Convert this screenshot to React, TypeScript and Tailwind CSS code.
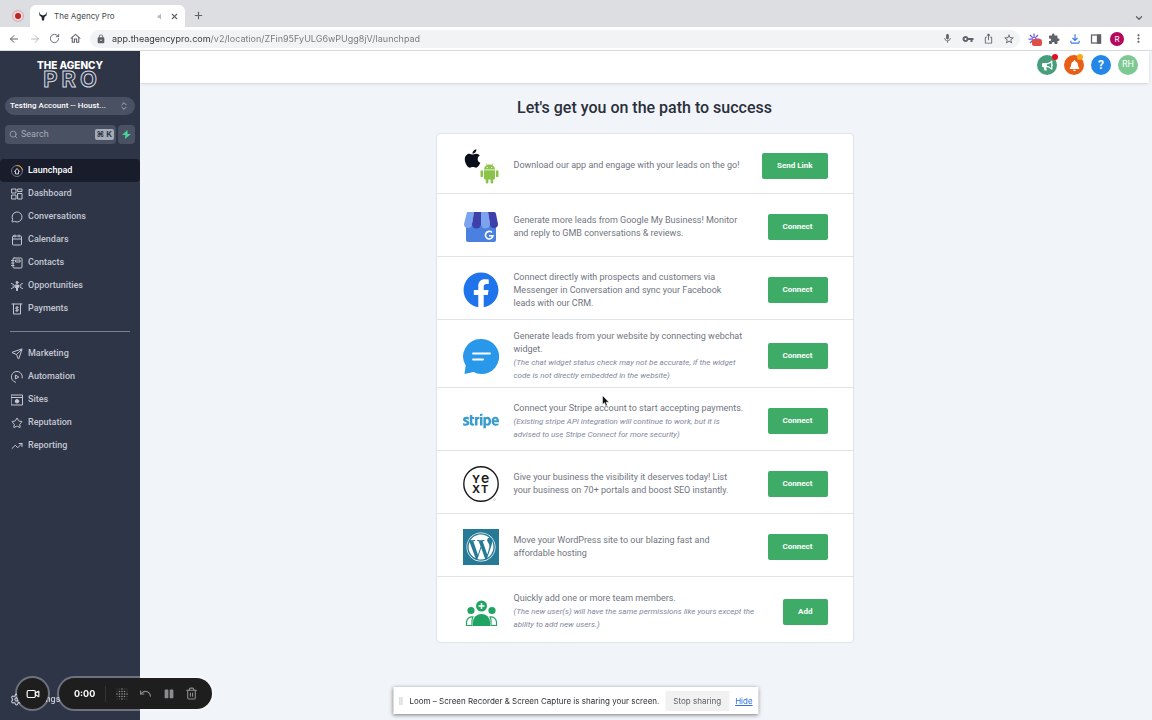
import type { ReactNode } from 'react'
import {
  ArrowLeft,
  ArrowRight,
  Calendar,
  ChevronDown,
  ChevronsUpDown,
  MessageCircle,
  Plus,
  RotateCw,
  Search,
  Send,
  Settings,
  Star,
  Trash2,
  TrendingUp,
  Undo,
  Video,
  X,
} from 'lucide-react'
import { FaApple, FaBell, FaBullhorn, FaFacebook, FaPause, FaStripe, FaWordpress } from 'react-icons/fa'
import {
  MdExtension,
  MdLock,
  MdMic,
  MdMoreVert,
  MdOutlineFileDownload,
  MdOutlineHome,
  MdOutlineIosShare,
  MdStarBorder,
  MdVolumeMute,
  MdVpnKey,
} from 'react-icons/md'

type NavItem = { label: string; icon: ReactNode; active?: boolean }

type Step = {
  icon: ReactNode
  text: string
  note?: string
  action: string
  height: string
}

function LineIcon({ children }: { children: ReactNode }) {
  return (
    <svg width="12" height="12" viewBox="0 0 24 24" fill="none" stroke="currentColor" strokeWidth="2" strokeLinecap="round" strokeLinejoin="round">
      {children}
    </svg>
  )
}

const mainNav: NavItem[] = [
  {
    label: 'Launchpad',
    active: true,
    icon: (
      <LineIcon>
        <circle cx="12" cy="12" r="11" stroke="#6f7686" />
        <path d="M12 1a11 11 0 0 1 11 9" stroke="#e0a040" />
        <path d="M9 17v-4H7l5-6 5 6h-2v4z" stroke="#d5d8df" />
      </LineIcon>
    ),
  },
  {
    label: 'Dashboard',
    icon: (
      <LineIcon>
        <rect x="2" y="2" width="8" height="8" />
        <rect x="14" y="2" width="8" height="5" />
        <rect x="2" y="14" width="8" height="8" />
        <rect x="14" y="11" width="8" height="11" />
      </LineIcon>
    ),
  },
  { label: 'Conversations', icon: <MessageCircle size={12} /> },
  { label: 'Calendars', icon: <Calendar size={12} /> },
  {
    label: 'Contacts',
    icon: (
      <LineIcon>
        <rect x="4" y="2" width="18" height="20" rx="2" />
        <path d="M1 7h5M1 12h5M1 17h5M10 6h8v4h-8z" />
      </LineIcon>
    ),
  },
  {
    label: 'Opportunities',
    icon: (
      <LineIcon>
        <circle cx="12" cy="5" r="2" fill="currentColor" />
        <path d="M9 10h6v5h-2v6h-2v-6H9z" fill="currentColor" />
        <path d="M1 7l4 2M1 17l4-2M23 7l-4 2M23 17l-4-2M4 12h3M20 12h-3" />
      </LineIcon>
    ),
  },
  {
    label: 'Payments',
    icon: (
      <LineIcon>
        <path d="M2 2h20M5 2v20h14V2M14.500 8.500h-3.500a1.700 1.700 0 0 0 0 3.500h2a1.700 1.700 0 0 1 0 3.500H9.500M12 7v10" />
      </LineIcon>
    ),
  },
]

const toolsNav: NavItem[] = [
  { label: 'Marketing', icon: <Send size={12} /> },
  {
    label: 'Automation',
    icon: (
      <LineIcon>
        <path d="M22.500 14A11 11 0 1 0 9 22.500" />
        <path d="M9.500 8.500l6 3.500-6 3.500z" />
      </LineIcon>
    ),
  },
  {
    label: 'Sites',
    icon: (
      <LineIcon>
        <rect x="1" y="2" width="22" height="20" />
        <path d="M1 7h22" />
        <circle cx="12" cy="14.500" r="3.500" fill="currentColor" />
      </LineIcon>
    ),
  },
  { label: 'Reputation', icon: <Star size={12} /> },
  { label: 'Reporting', icon: <TrendingUp size={12} /> },
]

function AppStores() {
  return (
    <div className="relative h-9 w-9">
      <FaApple size={21} className="absolute -left-px top-0 text-[#0b0f1a]" />
      <svg className="absolute bottom-0 right-0" width="19" height="21" viewBox="0 0 19 21" fill="#8bc34a">
        <path d="M4 6.500a5.500 5 0 0 1 11 0z" />
        <path d="M6 0.500l1.500 2.500M13 0.500l-1.500 2.500" stroke="#8bc34a" strokeWidth="0.700" />
        <path d="M4 7.200h11v8a1.200 1.200 0 0 1-1.200 1.200H5.200A1.200 1.200 0 0 1 4 15.200z" />
        <rect x="0.500" y="7.200" width="2.600" height="7" rx="1.300" />
        <rect x="15.900" y="7.200" width="2.600" height="7" rx="1.300" />
        <rect x="5.800" y="14" width="2.600" height="6.600" rx="1.300" />
        <rect x="10.600" y="14" width="2.600" height="6.600" rx="1.300" />
        <circle cx="7.200" cy="4.300" r="0.600" fill="#fff" />
        <circle cx="11.800" cy="4.300" r="0.600" fill="#fff" />
      </svg>
    </div>
  )
}

function StoreFront() {
  return (
    <svg width="36" height="36" viewBox="0 0 36 36">
      <path d="M3 14h30v17a2 2 0 0 1-2 2H5a2 2 0 0 1-2-2z" fill="#4a80e0" />
      <path d="M4 3h7l-2 12a4 4 0 0 1-8 0z" fill="#7ba4ee" />
      <path d="M11 3h7v12a4 4 0 0 1-9 0z" fill="#3c40a8" />
      <path d="M18 3h7l2 12a4 4 0 0 1-9 0z" fill="#7ba4ee" />
      <path d="M25 3h6a2 2 0 0 1 2 2l2 10a4 4 0 0 1-8 0z" fill="#3c40a8" />
      <path d="M29 23.500a3.800 3.800 0 1 0 1 3.200h-4" fill="none" stroke="#fff" strokeWidth="1.600" />
    </svg>
  )
}

function ChatBubble() {
  return (
    <svg width="36" height="36" viewBox="0 0 36 36">
      <path d="M18.500 1a17.500 17.500 0 1 1-8 33L1.500 36l1.200-8.500A17.500 17.500 0 0 1 18.500 1z" fill="#2a98ea" />
      <path d="M10 15.500h17M10 21.500h10" stroke="#fff" strokeWidth="1.800" strokeLinecap="round" />
    </svg>
  )
}

function Yext() {
  return (
    <svg width="36" height="36" viewBox="0 0 36 36" fill="#1c1c1c" fontFamily="Inter, sans-serif" fontWeight="700">
      <circle cx="18" cy="18" r="17.200" fill="none" stroke="#1c1c1c" strokeWidth="1.400" />
      <text x="9" y="17" fontSize="11">Y</text>
      <text x="18" y="17" fontSize="14" fontWeight="600">e</text>
      <text x="9" y="27" fontSize="11">X</text>
      <text x="18" y="27" fontSize="11">T</text>
      <circle cx="31.500" cy="33.500" r="1" fill="none" stroke="#aaa" strokeWidth="0.500" />
    </svg>
  )
}

function TeamAdd() {
  return (
    <svg width="36" height="36" viewBox="0 0 36 36" fill="#1fa463">
      <circle cx="18.500" cy="12" r="5.500" />
      <path d="M18.500 9v6M15.500 12h6" stroke="#fff" strokeWidth="1.500" />
      <circle cx="8" cy="16.500" r="3.600" />
      <circle cx="29" cy="16.500" r="3.600" />
      <path d="M10 32v-4a8.500 8 0 0 1 17 0v4z" />
      <path d="M9 31.500v-5q0-2 1-3.500a5.500 5.500 0 0 0-6.500 5v3.500zM28 31.500v-5q0-2-1-3.500a5.500 5.500 0 0 1 6.500 5v3.500z" fill="none" stroke="#1fa463" strokeWidth="1.200" />
    </svg>
  )
}

const steps: Step[] = [
  {
    icon: <AppStores />,
    text: 'Download our app and engage with your leads on the go!',
    action: 'Send Link',
    height: 'min-h-[60px]',
  },
  {
    icon: <StoreFront />,
    text: 'Generate more leads from Google My Business! Monitor and reply to GMB conversations & reviews.',
    action: 'Connect',
    height: 'min-h-[63px]',
  },
  {
    icon: <FaFacebook size={36} className="text-[#1f74ec]" />,
    text: 'Connect directly with prospects and customers via Messenger in Conversation and sync your Facebook leads with our CRM.',
    action: 'Connect',
    height: 'min-h-[63px]',
  },
  {
    icon: <ChatBubble />,
    text: 'Generate leads from your website by connecting webchat widget.',
    note: '(The chat widget status check may not be accurate, if the widget code is not directly embedded in the website)',
    action: 'Connect',
    height: 'min-h-[68px]',
  },
  {
    icon: <FaStripe size={36} className="text-[#3a9ccd]" />,
    text: 'Connect your Stripe account to start accepting payments.',
    note: '(Existing stripe API integration will continue to work, but it is advised to use Stripe Connect for more security)',
    action: 'Connect',
    height: 'min-h-[63px]',
  },
  {
    icon: <Yext />,
    text: 'Give your business the visibility it deserves today! List your business on 70+ portals and boost SEO instantly.',
    action: 'Connect',
    height: 'min-h-[63px]',
  },
  {
    icon: (
      <div className="flex h-9 w-9 items-center justify-center bg-[#277a96]">
        <FaWordpress size={30} className="text-white" />
      </div>
    ),
    text: 'Move your WordPress site to our blazing fast and affordable hosting',
    action: 'Connect',
    height: 'min-h-[63px]',
  },
  {
    icon: <TeamAdd />,
    text: 'Quickly add one or more team members.',
    note: '(The new user(s) will have the same permissions like yours except the ability to add new users.)',
    action: 'Add',
    height: 'min-h-[65px]',
  },
]

function BrowserChrome() {
  return (
    <div className="font-[Inter,sans-serif] text-[#5f6368]">
      <div className="flex h-[27px] items-end bg-[#dddee2] pl-3 pr-2">
        <span className="mb-[5px] flex h-3 w-3 items-center justify-center rounded-full border border-[#e8a3a5]">
          <span className="h-1.5 w-1.5 rounded-full bg-[#c5221f]" />
        </span>
        <div className="ml-1.5 flex h-[22px] w-[155px] items-center rounded-t-md bg-white pl-2 pr-1.5 text-[8px]">
          <svg width="10" height="10" viewBox="0 0 20 20" fill="#1f2536">
            <path d="M2 1l3 6 5 2 5-2 3-6-1 8-4 3-1 7H8l-1-7-4-3z" />
          </svg>
          <span className="ml-1.5 flex-1 text-[#45484d]">The Agency Pro</span>
          <MdVolumeMute size={9} className="mr-1.5 text-[#b5b7ba]" />
          <button aria-label="Close tab"><X size={9} strokeWidth={3} /></button>
        </div>
        <button aria-label="New tab" className="mb-1.5 ml-2"><Plus size={11} strokeWidth={2.5} /></button>
        <button aria-label="Search tabs" className="mb-1 ml-auto"><ChevronDown size={10} strokeWidth={3} /></button>
      </div>
      <div className="flex h-6 items-center border-b border-[#dcdde0] bg-white pl-2 pr-[7px]">
        <div className="flex w-[74px] items-center justify-between">
          <button aria-label="Back"><ArrowLeft size={12} /></button>
          <button aria-label="Forward" className="text-[#b9bbbe]"><ArrowRight size={12} /></button>
          <button aria-label="Reload"><RotateCw size={11} /></button>
          <button aria-label="Home"><MdOutlineHome size={13} /></button>
        </div>
        <div className="ml-2 flex h-[18px] flex-1 items-center rounded-full bg-[#f1f3f4] pl-1.5 pr-[5px]">
          <MdLock size={10} />
          <input
            aria-label="Address"
            defaultValue="app.theagencypro.com/v2/location/ZFin95FyULG6wPUgg8jV/launchpad"
            className="ml-1.5 min-w-0 flex-1 bg-[linear-gradient(90deg,#303236_98px,#74777b_98px)] bg-clip-text text-[9px] text-transparent outline-none"
          />
          <div className="flex items-center gap-[9px]">
            <MdMic size={11} />
            <MdVpnKey size={12} />
            <MdOutlineIosShare size={11} />
            <MdStarBorder size={12} />
          </div>
        </div>
        <div className="ml-2 flex items-center gap-2">
          <button aria-label="Loom" className="relative h-3 w-3">
            <svg width="12" height="12" viewBox="0 0 24 24" stroke="#6a5be2" strokeWidth="2.500">
              <circle cx="12" cy="12" r="4" fill="none" />
              <path d="M12 1v6M12 17v6M1 12h6M17 12h6M4 4l4 4M16 16l4 4M4 20l4-4M16 8l4-4" />
            </svg>
            <span className="absolute left-1 top-1.5 h-[7px] w-2.5 rounded-xs bg-[#e04f47]" />
          </button>
          <MdExtension size={12} />
          <MdOutlineFileDownload size={14} className="text-[#3b78e7]" />
          <svg width="12" height="12" viewBox="0 0 24 24" fill="none" stroke="currentColor" strokeWidth="2.500">
            <rect x="3" y="4" width="18" height="16" />
            <path d="M15 4h6v16h-6z" fill="currentColor" />
          </svg>
          <span className="flex h-3.5 w-3.5 items-center justify-center rounded-full bg-[#b5085b] text-[8px] text-white">R</span>
          <button aria-label="Menu"><MdMoreVert size={13} /></button>
        </div>
      </div>
    </div>
  )
}

function NavList({ items }: { items: NavItem[] }) {
  return (
    <ul>
      {items.map((item) => (
        <li key={item.label}>
          <a
            href="#"
            className={`flex h-[23px] items-center gap-[5px] pl-[11px] text-[9px] font-medium ${
              item.active ? 'rounded-sm bg-[#191c2a] text-white' : 'text-[#c3c7d1]'
            }`}
          >
            {item.icon}
            {item.label}
          </a>
        </li>
      ))}
    </ul>
  )
}

function Sidebar() {
  return (
    <aside className="w-[140px] shrink-0 bg-[#2e3547] pt-2">
      <div className="flex flex-col items-center text-white">
        <span className="font-[Inter,sans-serif] text-[10px] font-extrabold leading-3">THE AGENCY</span>
        <span className="flex gap-1 font-[Inter,sans-serif] text-[22px] font-bold leading-4 text-transparent [-webkit-text-stroke:1px_#d7dae1]">
          <span>P</span>
          <span>R</span>
          <span>O</span>
        </span>
      </div>
      <div className="mt-2.5 px-[5px]">
        <div className="relative">
          <select
            aria-label="Account"
            className="block h-[18px] w-full appearance-none rounded-full bg-[#4a5162] pl-[5px] pr-6 text-[8px] font-medium text-white"
          >
            <option>Testing Account -- Houst...</option>
          </select>
          <ChevronsUpDown size={10} className="pointer-events-none absolute right-1.5 top-1 text-[#b9bdc8]" />
        </div>
        <div className="mt-2.5 flex gap-0.5">
          <label className="flex h-[19px] flex-1 items-center rounded-sm bg-[#4a5162] pl-1 pr-0.5 text-[#a6abb8]">
            <Search size={9} />
            <input placeholder="Search" aria-label="Search" className="ml-[3px] w-0 flex-1 text-[9px] outline-none placeholder:text-[#a6abb8]" />
            <kbd className="rounded-xs bg-[#a6abb8] px-0.5 font-[Inter,'DejaVu_Sans',sans-serif] text-[8px] font-bold leading-[11px] text-[#2e3547]">⌘ K</kbd>
          </label>
          <button aria-label="Quick actions" className="flex h-[19px] w-[17px] items-center justify-center rounded-sm bg-[#4a5162]">
            <svg width="9" height="9" viewBox="0 0 16 16" fill="#43d69b">
              <path d="M9.500 0L0 9h6l-1 7 11-9h-6z" />
            </svg>
          </button>
        </div>
      </div>
      <nav className="mt-[15px]">
        <NavList items={mainNav} />
        <hr className="mx-2.5 mt-[11px] mb-2.5 border-[#7c8292]" />
        <NavList items={toolsNav} />
      </nav>
      <a href="#" className="fixed bottom-3.5 left-2.5 flex items-center gap-1 text-[9px] font-medium text-[#c3c7d1]">
        <Settings size={13} />
        Settings
      </a>
    </aside>
  )
}

function TopBar() {
  return (
    <header className="flex h-8 items-center justify-end gap-[7px] bg-white pb-1 pr-[11px] text-white shadow-sm">
      <button aria-label="Announcements" className="relative flex h-5 w-5 items-center justify-center rounded-full bg-[#469e7a]">
        <FaBullhorn size={11} />
        <span className="absolute -right-px -top-px h-1.5 w-1.5 rounded-full bg-[#e01020]" />
      </button>
      <button aria-label="Notifications" className="relative flex h-5 w-5 items-center justify-center rounded-full bg-[#ea5d16]">
        <FaBell size={11} />
        <span className="absolute right-px -top-px h-1.5 w-1.5 rounded-full bg-[#f8a91b]" />
      </button>
      <button aria-label="Help" className="flex h-5 w-5 items-center justify-center rounded-full bg-[#2487e8] text-[12px] font-bold">?</button>
      <button aria-label="Profile" className="flex h-5 w-5 items-center justify-center rounded-full bg-[#7cc993] text-[9px]">RH</button>
    </header>
  )
}

function StepRow({ step }: { step: Step }) {
  return (
    <li className={`flex items-center border-b border-[#dfe3ea] pt-1 pl-[26px] pr-[25px] last:border-b-0 ${step.height}`}>
      <div className="flex w-9 shrink-0 justify-center">{step.icon}</div>
      <div className="ml-[15px] mr-5 flex-1 leading-[13px]">
        <p className="max-w-[230px] text-[9px] text-[#707580]">{step.text}</p>
        {step.note && <p className="text-[8px] italic text-[#8288a0]">{step.note}</p>}
      </div>
      <button className="h-[26px] shrink-0 rounded-xs bg-[#3eac67] px-[15px] text-[8px] font-bold text-white">{step.action}</button>
    </li>
  )
}

function LoomControls() {
  return (
    <div className="fixed bottom-[11px] left-[17px] flex gap-[11px] text-[#8d8d8f]">
      <button aria-label="Camera" className="flex h-[31px] w-[31px] items-center justify-center rounded-full bg-[#1e1e1f] text-white ring-2 ring-white/30">
        <Video size={14} />
      </button>
      <div className="flex h-[31px] w-[153px] items-center rounded-full bg-[#1e1e1f] pl-[15px] pr-3.5 ring-2 ring-white/30">
        <span className="font-[Inter,sans-serif] text-[9px] font-bold text-white">0:00</span>
        <span className="ml-2.5 h-4 w-px bg-[#333335]" />
        <div className="ml-2.5 flex flex-1 items-center justify-between">
          <button aria-label="Effects">
            <svg width="12" height="12" viewBox="0 0 12 12" fill="currentColor">
              {[1, 3.5, 6, 8.5, 11].map((y) =>
                [1, 3.5, 6, 8.5, 11].map((x) => (
                  <circle key={`${x}-${y}`} cx={x} cy={y} r={Math.abs(x - 6) + Math.abs(y - 6) > 5 ? 0.4 : 0.8} />
                ))
              )}
            </svg>
          </button>
          <button aria-label="Restart"><Undo size={13} /></button>
          <button aria-label="Pause"><FaPause size={10} /></button>
          <button aria-label="Delete"><Trash2 size={13} /></button>
        </div>
      </div>
    </div>
  )
}

function SharingBar() {
  return (
    <div className="fixed bottom-1.5 left-1/2 flex h-[27px] -translate-x-1/2 items-center bg-white px-1.5 font-[Inter,sans-serif] text-[8px] text-[#2c2f33] shadow-[0_1px_4px_rgba(0,0,0,0.5)]">
      <span className="h-2 w-[3px] border-x border-[#c8cacd]" />
      <span className="ml-[7px] whitespace-nowrap">Loom – Screen Recorder &amp; Screen Capture is sharing your screen.</span>
      <button className="ml-1.5 h-5 whitespace-nowrap bg-[#f1f1f2] px-2 text-[#5b5d60]">Stop sharing</button>
      <a href="#" className="ml-1.5 text-[#2f6fdc] underline">Hide</a>
    </div>
  )
}

export default function App() {
  return (
    <div className="flex min-h-screen flex-col bg-[#f1f4f9] font-[Roboto,sans-serif]">
      <BrowserChrome />
      <div className="flex flex-1">
        <Sidebar />
        <div className="flex-1 pr-[3px]">
          <TopBar />
          <main className="px-4 pt-[15px]">
            <h1 className="mb-[15px] text-center text-[16px] font-medium leading-5 text-[#2a2f3a]">Let's get you on the path to success</h1>
            <ul className="mx-auto max-w-[418px] rounded-sm border border-[#dfe3ea] bg-white">
              {steps.map((step) => (
                <StepRow key={step.text} step={step} />
              ))}
            </ul>
          </main>
        </div>
      </div>
      <LoomControls />
      <SharingBar />
      {/* Mouse pointer */}
      <svg className="pointer-events-none fixed left-[602px] top-[395px]" width="8" height="12" viewBox="0 0 8 12">
        <path d="M0.500 0.500v9l2-1.800 1.300 3.200 1.500-.6L4 7.200h3z" fill="#111" stroke="#fff" strokeWidth="0.500" />
      </svg>
    </div>
  )
}
